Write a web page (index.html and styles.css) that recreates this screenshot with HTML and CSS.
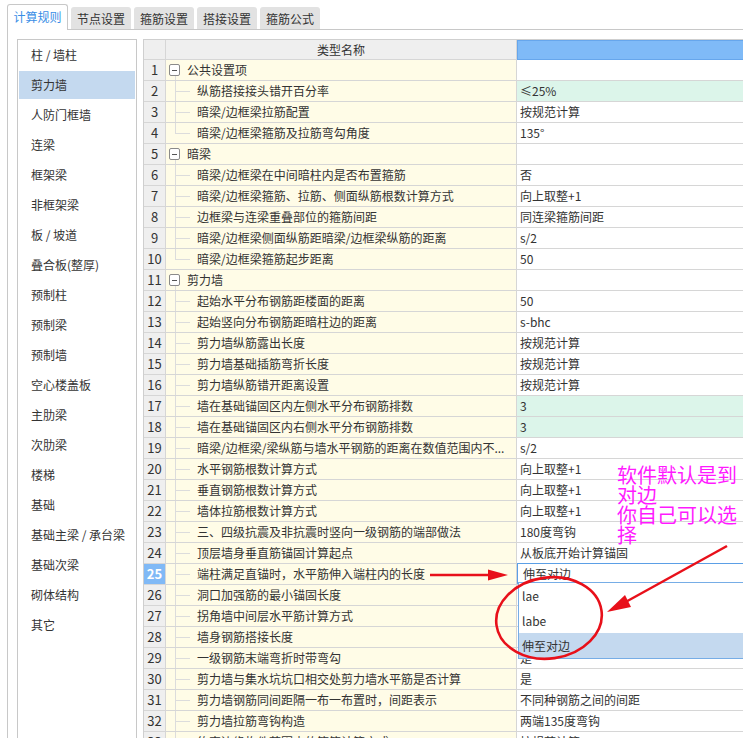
FILE: index.html
```html
<!DOCTYPE html>
<html lang="zh-CN">
<head>
<meta charset="utf-8">
<title>计算规则</title>
<link rel="stylesheet" href="styles.css">
</head>
<body>
<div class="app">
  <div class="tabs">
    <div class="tab active">计算规则</div>
    <div class="tab">节点设置</div>
    <div class="tab">箍筋设置</div>
    <div class="tab">搭接设置</div>
    <div class="tab">箍筋公式</div>
  </div>
  <div class="panel">
    <ul class="side">
      <li>柱 / 墙柱</li>
      <li class="sel">剪力墙</li>
      <li>人防门框墙</li>
      <li>连梁</li>
      <li>框架梁</li>
      <li>非框架梁</li>
      <li>板 / 坡道</li>
      <li>叠合板(整厚)</li>
      <li>预制柱</li>
      <li>预制梁</li>
      <li>预制墙</li>
      <li>空心楼盖板</li>
      <li>主肋梁</li>
      <li>次肋梁</li>
      <li>楼梯</li>
      <li>基础</li>
      <li>基础主梁 / 承台梁</li>
      <li>基础次梁</li>
      <li>砌体结构</li>
      <li>其它</li>
    </ul>
    <div class="grid">
      <div class="row head"><div class="c num"></div><div class="c name">类型名称</div><div class="c val"></div></div>
      <div class="row"><div class="c num">1</div><div class="c name group"><span class="box"><i></i></span>公共设置项</div><div class="c val"></div></div>
      <div class="row"><div class="c num">2</div><div class="c name child">纵筋搭接接头错开百分率</div><div class="c val green">≤25%</div></div>
      <div class="row"><div class="c num">3</div><div class="c name child">暗梁/边框梁拉筋配置</div><div class="c val">按规范计算</div></div>
      <div class="row"><div class="c num">4</div><div class="c name child last">暗梁/边框梁箍筋及拉筋弯勾角度</div><div class="c val">135°</div></div>
      <div class="row"><div class="c num">5</div><div class="c name group"><span class="box"><i></i></span>暗梁</div><div class="c val"></div></div>
      <div class="row"><div class="c num">6</div><div class="c name child">暗梁/边框梁在中间暗柱内是否布置箍筋</div><div class="c val">否</div></div>
      <div class="row"><div class="c num">7</div><div class="c name child">暗梁/边框梁箍筋、拉筋、侧面纵筋根数计算方式</div><div class="c val">向上取整+1</div></div>
      <div class="row"><div class="c num">8</div><div class="c name child">边框梁与连梁重叠部位的箍筋间距</div><div class="c val">同连梁箍筋间距</div></div>
      <div class="row"><div class="c num">9</div><div class="c name child">暗梁/边框梁侧面纵筋距暗梁/边框梁纵筋的距离</div><div class="c val">s/2</div></div>
      <div class="row"><div class="c num">10</div><div class="c name child last">暗梁/边框梁箍筋起步距离</div><div class="c val">50</div></div>
      <div class="row"><div class="c num">11</div><div class="c name group"><span class="box"><i></i></span>剪力墙</div><div class="c val"></div></div>
      <div class="row"><div class="c num">12</div><div class="c name child">起始水平分布钢筋距楼面的距离</div><div class="c val">50</div></div>
      <div class="row"><div class="c num">13</div><div class="c name child">起始竖向分布钢筋距暗柱边的距离</div><div class="c val">s-bhc</div></div>
      <div class="row"><div class="c num">14</div><div class="c name child">剪力墙纵筋露出长度</div><div class="c val">按规范计算</div></div>
      <div class="row"><div class="c num">15</div><div class="c name child">剪力墙基础插筋弯折长度</div><div class="c val">按规范计算</div></div>
      <div class="row"><div class="c num">16</div><div class="c name child">剪力墙纵筋错开距离设置</div><div class="c val">按规范计算</div></div>
      <div class="row"><div class="c num">17</div><div class="c name child">墙在基础锚固区内左侧水平分布钢筋排数</div><div class="c val green">3</div></div>
      <div class="row"><div class="c num">18</div><div class="c name child">墙在基础锚固区内右侧水平分布钢筋排数</div><div class="c val green">3</div></div>
      <div class="row"><div class="c num">19</div><div class="c name child">暗梁/边框梁/梁纵筋与墙水平钢筋的距离在数值范围内不...</div><div class="c val">s/2</div></div>
      <div class="row"><div class="c num">20</div><div class="c name child">水平钢筋根数计算方式</div><div class="c val">向上取整+1</div></div>
      <div class="row"><div class="c num">21</div><div class="c name child">垂直钢筋根数计算方式</div><div class="c val">向上取整+1</div></div>
      <div class="row"><div class="c num">22</div><div class="c name child">墙体拉筋根数计算方式</div><div class="c val">向上取整+1</div></div>
      <div class="row"><div class="c num">23</div><div class="c name child">三、四级抗震及非抗震时竖向一级钢筋的端部做法</div><div class="c val">180度弯钩</div></div>
      <div class="row"><div class="c num">24</div><div class="c name child">顶层墙身垂直筋锚固计算起点</div><div class="c val">从板底开始计算锚固</div></div>
      <div class="row"><div class="c num cur">25</div><div class="c name child">端柱满足直锚时，水平筋伸入端柱内的长度</div><div class="c val editing"><div class="editor">伸至对边</div><ul class="dropdown"><li>lae</li><li>labe</li><li class="on">伸至对边</li></ul></div></div>
      <div class="row"><div class="c num">26</div><div class="c name child">洞口加强筋的最小锚固长度</div><div class="c val"></div></div>
      <div class="row"><div class="c num">27</div><div class="c name child">拐角墙中间层水平筋计算方式</div><div class="c val"></div></div>
      <div class="row"><div class="c num">28</div><div class="c name child">墙身钢筋搭接长度</div><div class="c val"></div></div>
      <div class="row"><div class="c num">29</div><div class="c name child">一级钢筋末端弯折时带弯勾</div><div class="c val">是</div></div>
      <div class="row"><div class="c num">30</div><div class="c name child">剪力墙与集水坑坑口相交处剪力墙水平筋是否计算</div><div class="c val">是</div></div>
      <div class="row"><div class="c num">31</div><div class="c name child">剪力墙钢筋同间距隔一布一布置时，间距表示</div><div class="c val">不同种钢筋之间的间距</div></div>
      <div class="row"><div class="c num">32</div><div class="c name child">剪力墙拉筋弯钩构造</div><div class="c val">两端135度弯钩</div></div>
      <div class="row"><div class="c num">33</div><div class="c name child">约束边缘构件范围内的箍筋计算方式</div><div class="c val">按规范计算</div></div>
    </div>
  </div>
</div>
<div class="note">软件默认是到对边<br>你自己可以选择</div>
<svg class="marks" width="743" height="738" viewBox="0 0 743 738">
  <line x1="430" y1="575" x2="492" y2="575" stroke="#e8101a" stroke-width="2.5"/>
  <polygon points="488,569.5 508,575 488,580.5" fill="#e8101a"/>
  <ellipse cx="549" cy="618" rx="53" ry="40.5" transform="rotate(-8 549 618)" fill="none" stroke="#e8101a" stroke-width="2.6"/>
  <line x1="727" y1="546" x2="622" y2="604" stroke="#e8101a" stroke-width="2.5"/>
  <polygon points="607,612 625,595 631,607" fill="#e8101a"/>
</svg>
</body>
</html>
```

FILE: styles.css
```css
* { box-sizing: border-box; }
html, body { margin: 0; padding: 0; overflow: hidden; background: #fff; }
body {
  width: 743px;
  height: 738px;
  position: relative;
  font-family: "Noto Sans CJK SC", "Microsoft YaHei", sans-serif;
  font-size: 12px;
  color: #333;
}
.app { padding: 4px 0 0 7px; }

.tabs { display: flex; align-items: flex-end; gap: 3px; height: 25px; }
.tab {
  width: 60px;
  height: 22px;
  background: #e2e2e2;
  border-radius: 3px 3px 0 0;
  display: flex;
  align-items: center;
  justify-content: center;
  color: #333;
}
.tab.active {
  width: 61px;
  height: 26px;
  margin-bottom: -1px;
  background: #fff;
  border: 1px solid #c8c8c8;
  border-bottom: none;
  color: #3a8ee6;
  position: relative;
  padding-bottom: 2px;
}

.panel {
  display: flex;
  align-items: flex-start;
  gap: 6px;
  border-top: 1px solid #c8c8c8;
  border-left: 1px solid #c8c8c8;
  padding: 9px 0 0 9px;
  height: 720px;
}

.side {
  list-style: none;
  margin: 0;
  padding: 1px 1px 0;
  width: 120px;
  height: 720px;
  flex: none;
  border: 1px solid #c8c8c8;
}
.side li {
  height: 28px;
  margin-bottom: 2px;
  line-height: 28px;
  padding-left: 12px;
  white-space: nowrap;
  color: #333;
}
.side li.sel { background: #c4d9ef; }

.grid {
  width: 760px;
  flex: none;
  border-top: 1px solid #cfcfcf;
  border-left: 1px solid #cfcfcf;
}
.row {
  display: grid;
  grid-template-columns: 22px 351px 1fr;
  height: 21px;
}
.row.head { height: 20px; }
.c {
  border-right: 1px solid #d6d6d6;
  border-bottom: 1px solid #d6d6d6;
  white-space: nowrap;
  overflow: hidden;
  line-height: 20px;
}
.head .c { line-height: 19px; background: #efefef; }
.head .name { text-align: center; padding-left: 0; }
.head .val { background: #7fbaf7; border: 1px solid #66a6ec; border-left-color: #66a6ec; }

.num {
  background: #efefef;
  text-align: center;
  font-size: 13px;
  color: #333;
}
.num.cur { background: #80b9f6; color: #fff; font-weight: bold; }

.name { background: #fffce7; }
.name.child {
  padding-left: 31px;
  background:
    linear-gradient(#dcdcdc, #dcdcdc) 9px 0 / 1px 100% no-repeat,
    linear-gradient(#dcdcdc, #dcdcdc) 10px 10px / 14px 1px no-repeat,
    #fffce7;
}
.name.child.last {
  background:
    linear-gradient(#dcdcdc, #dcdcdc) 9px 0 / 1px 11px no-repeat,
    linear-gradient(#dcdcdc, #dcdcdc) 10px 10px / 14px 1px no-repeat,
    #fffce7;
}
.name.group {
  display: flex;
  align-items: center;
  padding-left: 3px;
  background:
    linear-gradient(#dcdcdc, #dcdcdc) 9px 16px / 1px 100% no-repeat,
    #fffce7;
}
.box {
  width: 11px;
  height: 12px;
  border: 1px solid #8a8a8a;
  border-radius: 2px;
  margin-right: 7px;
  display: flex;
  align-items: center;
  justify-content: center;
  background: #fff;
  flex: none;
}
.box i { display: block; width: 5px; height: 1px; background: #555; }

.val { padding-left: 3px; background: #fff; }
.val.green { background: #dcf5ea; }
.val.editing { position: relative; overflow: visible; }

.editor {
  position: absolute;
  left: 0;
  top: -1px;
  right: 0;
  height: 21px;
  border: 1px solid #5b9fe6;
  background: #fff;
  padding-left: 5px;
  line-height: 19px;
}
.dropdown {
  position: absolute;
  left: 1px;
  top: 18px;
  width: 300px;
  margin: 0;
  padding: 0;
  list-style: none;
  border: 1px solid #76ade6;
  background: #fff;
  z-index: 2;
}
.dropdown li { height: 25px; line-height: 25px; padding-left: 3px; color: #333; }
.dropdown li.on { background: #c4d9ef; }

.note {
  position: absolute;
  left: 617px;
  top: 465px;
  width: 126px;
  font-size: 20px;
  line-height: 20px;
  color: #ff1aff;
  z-index: 3;
}
.marks { position: absolute; left: 0; top: 0; z-index: 4; }
```
